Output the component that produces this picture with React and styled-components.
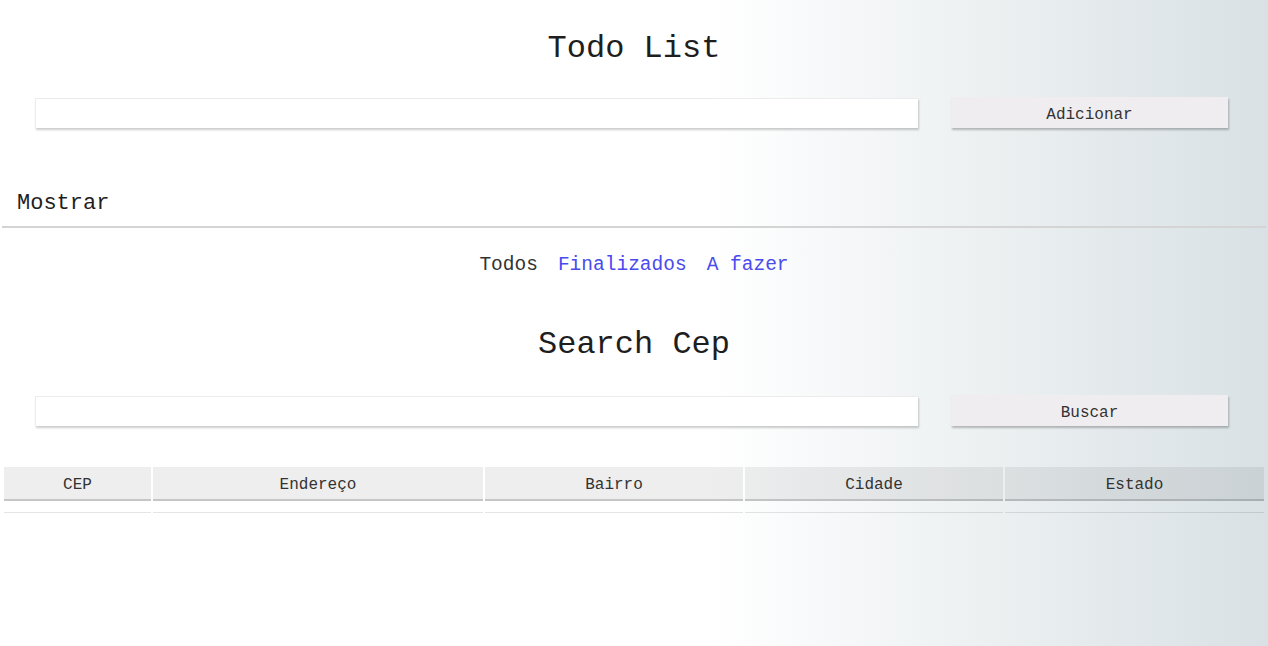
import React from "react";
import styled, { createGlobalStyle } from "styled-components";

const Global = createGlobalStyle`
  html, body { margin: 0; padding: 0; }
  body {
    min-height: 100vh;
    font-family: "Liberation Mono", "DejaVu Sans Mono", monospace;
    color: #222;
    background: linear-gradient(90deg, #ffffff 0%, #ffffff 56%, #d9e1e4 100%);
  }
  #root { min-height: 100vh; }
`;

const Page = styled.div`
  padding: 0 2px;
  display: flex;
  flex-direction: column;
`;

const Title = styled.h1`
  margin: ${(p) => p.$top}px 0 0;
  font-size: 32px;
  line-height: 40px;
  font-weight: normal;
  text-align: center;
  color: #1e1e1e;
`;

const FormRow = styled.div`
  display: flex;
  align-items: stretch;
  gap: 33px;
  margin-top: ${(p) => p.$top}px;
  padding: 0 38px 0 33px;
  height: 31px;
`;

const TextInput = styled.input`
  flex: 1;
  box-sizing: border-box;
  height: 30px;
  margin-top: 1px;
  border: none;
  border-top: 1px solid #ececec;
  border-left: 1px solid #ececec;
  background: #fff;
  box-shadow: 1px 2px 2px rgba(0, 0, 0, 0.2);
  outline: none;
  font-family: inherit;
  font-size: 16px;
  padding: 0 8px;
`;

const Button = styled.button`
  width: 277px;
  height: 31px;
  border: none;
  background: #f0edf0;
  box-shadow: 1px 2px 2px rgba(0, 0, 0, 0.25);
  font-family: inherit;
  font-size: 16px;
  color: #333;
  padding: 5px 0 0;
  cursor: pointer;
`;

const SectionLabel = styled.h2`
  margin: 61px 0 0;
  padding-left: 15px;
  font-size: 22px;
  line-height: 30px;
  font-weight: normal;
  color: #1e1e1e;
`;

const Divider = styled.hr`
  margin: 7px 0 0;
  border: none;
  height: 2px;
  background: #d4d4d4;
`;

const Filters = styled.div`
  margin-top: 22px;
  display: flex;
  justify-content: center;
  gap: 20px;
  line-height: 30px;
  font-size: 19.5px;
`;

const FilterLink = styled.a`
  color: ${(p) => (p.$active ? "#333" : "#4a4aee")};
  text-decoration: none;
  cursor: pointer;
`;

const Table = styled.table`
  margin-top: 39px;
  width: 100%;
  table-layout: fixed;
  border-spacing: 2px;
`;

const Th = styled.th`
  height: 29px;
  padding: 3px 0 0;
  background: rgba(0, 0, 0, 0.065);
  border-bottom: 2px solid rgba(0, 0, 0, 0.17);
  font-weight: normal;
  font-size: 16px;
  color: #333;
  text-align: center;
`;

const Td = styled.td`
  height: 9px;
  padding: 0;
  border-bottom: 1px solid rgba(0, 0, 0, 0.1);
`;

const columns = [
  { name: "CEP", w: 147 },
  { name: "Endereço", w: 330 },
  { name: "Bairro", w: 258 },
  { name: "Cidade", w: 258 },
  { name: "Estado", w: 259 },
];

export default function App() {
  return (
    <>
      <Global />
      <Page>
        <Title $top={29}>Todo List</Title>
        <FormRow $top={28}>
          <TextInput type="text" />
          <Button>Adicionar</Button>
        </FormRow>
        <SectionLabel>Mostrar</SectionLabel>
        <Divider />
        <Filters>
          <FilterLink $active>Todos</FilterLink>
          <FilterLink>Finalizados</FilterLink>
          <FilterLink>A fazer</FilterLink>
        </Filters>
        <Title $top={45}>Search Cep</Title>
        <FormRow $top={30}>
          <TextInput type="text" />
          <Button>Buscar</Button>
        </FormRow>
        <Table>
          <colgroup>
            {columns.map((c) => (
              <col key={c.name} style={{ width: c.w }} />
            ))}
          </colgroup>
          <thead>
            <tr>
              {columns.map((c) => (
                <Th key={c.name}>{c.name}</Th>
              ))}
            </tr>
          </thead>
          <tbody>
            <tr>
              {columns.map((c) => (
                <Td key={c.name} />
              ))}
            </tr>
          </tbody>
        </Table>
      </Page>
    </>
  );
}
